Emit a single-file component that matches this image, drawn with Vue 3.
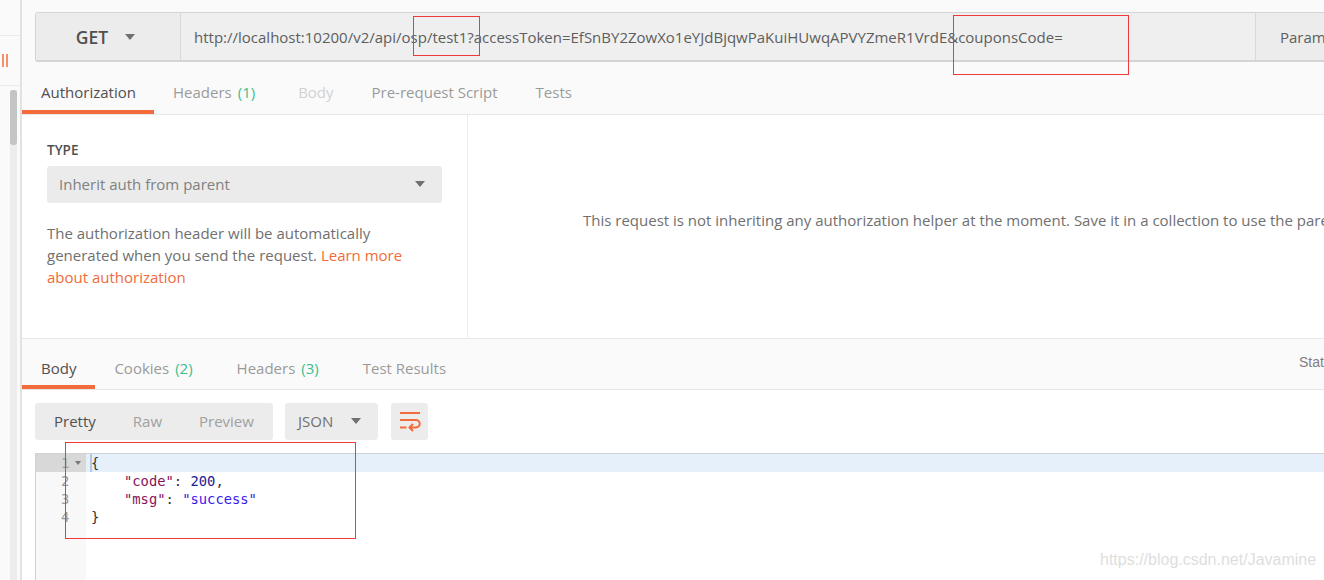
<script setup>
const requestTabs = [
  { label: 'Authorization', active: true },
  { label: 'Headers', count: '(1)' },
  { label: 'Body', disabled: true },
  { label: 'Pre-request Script' },
  { label: 'Tests' },
]
const responseTabs = [
  { label: 'Body', active: true },
  { label: 'Cookies', count: '(2)' },
  { label: 'Headers', count: '(3)' },
  { label: 'Test Results' },
]
</script>

<template>
  <div class="page">
    <aside class="side">
      <div class="side-top"></div>
      <div class="side-row"><span class="bars"></span></div>
      <div class="side-scroll"><div class="thumb"></div></div>
    </aside>

    <main class="main">
      <section class="request">
        <div class="urlbar">
          <div class="method">
            <span>GET</span>
            <i class="caret"></i>
          </div>
          <div class="url">http://localhost:10200/v2/api/osp/test1?accessToken=EfSnBY2ZowXo1eYJdBjqwPaKuiHUwqAPVYZmeR1VrdE&amp;couponsCode=</div>
          <div class="params">Params</div>
        </div>
        <nav class="tabs req-tabs">
          <div
            v-for="t in requestTabs"
            :key="t.label"
            class="tab"
            :class="{ active: t.active, disabled: t.disabled }"
          >{{ t.label }}<span v-if="t.count" class="count">{{ t.count }}</span></div>
        </nav>
      </section>

      <section class="auth">
        <div class="auth-left">
          <div class="type">TYPE</div>
          <div class="select">
            <span>Inherit auth from parent</span>
            <i class="caret small"></i>
          </div>
          <p class="desc">The authorization header will be automatically generated when you send the request. <span class="link">Learn more about authorization</span></p>
        </div>
        <div class="auth-right">
          <span>This request is not inheriting any authorization helper at the moment. Save it in a collection to use the parent's authorization helper.</span>
        </div>
      </section>

      <section class="response">
        <nav class="tabs res-tabs">
          <div
            v-for="t in responseTabs"
            :key="t.label"
            class="tab"
            :class="{ active: t.active }"
          >{{ t.label }}<span v-if="t.count" class="count">{{ t.count }}</span></div>
          <div class="status">Status</div>
        </nav>

        <div class="toolbar">
          <div class="seg">
            <span class="on">Pretty</span>
            <span>Raw</span>
            <span>Preview</span>
          </div>
          <div class="format">
            <span>JSON</span>
            <i class="caret small"></i>
          </div>
          <div class="wrap-btn">
            <svg width="22" height="20" viewBox="0 0 22 20" fill="none" stroke="#f26b3a" stroke-width="2">
              <path d="M1 1H21"/>
              <path d="M1 8H17A3.75 3.75 0 0 1 17 15.5H11"/>
              <path d="M1 15.5H7.5"/>
              <path d="M14 12L10.5 15.5L14 19"/>
            </svg>
          </div>
        </div>

        <div class="editor">
          <div class="gutter">
            <div class="num current">1<i class="fold"></i></div>
            <div class="num">2</div>
            <div class="num">3</div>
            <div class="num">4</div>
          </div>
          <div class="code">
            <div class="line current"><span class="cursor"></span>{</div>
            <div class="line indent"><span class="key">"code"</span>: <span class="n">200</span>,</div>
            <div class="line indent"><span class="key">"msg"</span>: <span class="s">"success"</span></div>
            <div class="line">}</div>
          </div>
        </div>
      </section>
    </main>

    <div class="mark m1"></div>
    <div class="mark m2"></div>
    <div class="mark m3"></div>
    <div class="watermark">https://blog.csdn.net/Javamine</div>
  </div>
</template>

<style>
html, body { margin: 0; background: #fff; overflow: hidden; }
</style>

<style scoped>
.page {
  position: relative;
  display: flex;
  width: 1324px;
  height: 580px;
  overflow: hidden;
  font-family: "Open Sans", sans-serif;
  font-size: 15px;
  color: #505050;
  background: #fff;
}

/* sidebar */
.side {
  flex: none;
  width: 22px;
  box-sizing: border-box;
  display: flex;
  flex-direction: column;
  background: #fafafa;
  border-right: 2px solid #e2e2e2;
}
.side-top { height: 35px; border-bottom: 1px solid #ececec; }
.side-row {
  height: 49px;
  border-bottom: 1px solid #ececec;
  display: flex;
  align-items: center;
}
.bars {
  width: 2px;
  height: 13px;
  margin-left: 2px;
  border-left: 2px solid #f7906a;
  border-right: 2px solid #f7906a;
}
.side-scroll {
  flex: 1;
  margin: 4px 3px 0 10px;
  background: #ececec;
}
.thumb { height: 55px; background: #c4c4c4; border-radius: 3px; }

/* main column */
.main {
  flex: 1;
  min-width: 0;
  display: flex;
  flex-direction: column;
}
.request {
  height: 115px;
  box-sizing: border-box;
  background: #fafafa;
  border-bottom: 1px solid #e8e8e8;
  padding-top: 12px;
}
.urlbar {
  display: flex;
  height: 50px;
  box-sizing: border-box;
  margin-left: 13px;
  width: 1400px;
  background: #efefef;
  border: 1px solid #d4d4d4;
  border-bottom-width: 2px;
  border-radius: 3px 0 0 3px;
}
.method {
  flex: none;
  width: 145px;
  box-sizing: border-box;
  display: flex;
  align-items: center;
  justify-content: center;
  gap: 17px;
  padding-right: 5px;
  background: #ececec;
  border-right: 1px solid #d8d8d8;
  font-size: 17.5px;
  font-weight: 600;
  color: #505050;
}
.caret {
  display: block;
  width: 0;
  height: 0;
  border-left: 5px solid transparent;
  border-right: 5px solid transparent;
  border-top: 6px solid #707070;
}
.url {
  flex: none;
  width: 1074px;
  box-sizing: border-box;
  padding-left: 13px;
  line-height: 48px;
  white-space: nowrap;
  color: #5e5e5e;
}
.params {
  flex: 1;
  padding-left: 24px;
  line-height: 48px;
  background: #ececec;
  border-left: 1px solid #d8d8d8;
  color: #5e5e5e;
}

/* tabs */
.tabs { display: flex; }
.tab {
  box-sizing: border-box;
  height: 43px;
  line-height: 42px;
  color: #9a9a9a;
  white-space: nowrap;
  border-bottom: 4px solid transparent;
}
.tab.active { color: #505050; border-bottom-color: #f26b3a; }
.tab.disabled { color: #d2d2d2; }
.count { color: #3cbf8f; margin-left: 6px; }

.req-tabs { margin-top: 9px; }
.req-tabs .tab { padding: 0 19px; }
.req-tabs .tab:first-child { width: 132px; }
.req-tabs .tab:nth-child(2) { margin-right: 5px; }

/* auth */
.auth {
  flex: none;
  height: 223px;
  display: flex;
  border-bottom: 1px solid #e8e8e8;
}
.auth-left {
  flex: none;
  width: 446px;
  box-sizing: border-box;
  padding: 25px 25px 0;
  border-right: 1px solid #ececec;
}
.type {
  font-size: 13.5px;
  font-weight: 600;
  line-height: 20px;
  color: #505050;
}
.select {
  margin-top: 6px;
  height: 37px;
  box-sizing: border-box;
  display: flex;
  align-items: center;
  justify-content: space-between;
  padding: 0 17px 2px 12px;
  width: 395px;
  background: #ebebeb;
  border-radius: 3px;
  color: #808080;
}
.caret.small {
  border-left-width: 5.5px;
  border-right-width: 5.5px;
  border-top-width: 6px;
}
.desc {
  margin: 19px 0 0;
  width: 380px;
  line-height: 22px;
  color: #707070;
}
.link { color: #f26b3a; }
.auth-right {
  flex: 1;
  min-width: 0;
  box-sizing: border-box;
  padding: 93px 0 0 115px;
  line-height: 24px;
  white-space: nowrap;
  color: #707070;
}

/* response */
.response { flex: 1; min-height: 0; display: flex; flex-direction: column; }
.res-tabs {
  position: relative;
  height: 51px;
  box-sizing: border-box;
  background: #fafafa;
  border-bottom: 1px solid #e6e6e6;
  padding-top: 9px;
}
.res-tabs .tab { height: 41px; line-height: 41px; padding: 0 19px; }
.res-tabs .tab:nth-child(2) { padding-right: 25px; }
.res-tabs .tab:nth-child(3) { padding-right: 25px; }
.status {
  position: absolute;
  left: 1277px;
  top: 15px;
  font-family: "Liberation Sans", sans-serif;
  font-size: 14px;
  color: #808080;
}
.toolbar {
  display: flex;
  gap: 12px;
  margin: 13px 0 0 13px;
  height: 37px;
}
.seg {
  display: flex;
  align-items: center;
  width: 238px;
  box-sizing: border-box;
  padding: 0 0 2px 19px;
  gap: 37px;
  background: #ececec;
  border-radius: 3px;
  color: #a0a0a0;
}
.seg .on { color: #505050; }
.format {
  display: flex;
  align-items: center;
  justify-content: space-between;
  width: 93px;
  box-sizing: border-box;
  padding: 0 17px 2px 13px;
  background: #ececec;
  border-radius: 3px;
  color: #707070;
}
.wrap-btn {
  width: 37px;
  margin-left: 1px;
  display: flex;
  align-items: center;
  justify-content: center;
  background: #ececec;
  border-radius: 3px;
}
.editor {
  flex: 1;
  display: flex;
  margin: 13px 0 0 13px;
  border-left: 1px solid #d0d0d0;
  font-family: "DejaVu Sans Mono", monospace;
  font-size: 13.8px;
  line-height: 18px;
}
.gutter {
  flex: none;
  width: 50px;
  background: #f8f8f8;
  border-top: 1px solid #cfd3d8;
  color: #9a9a9a;
}
.num {
  position: relative;
  height: 18px;
  padding-left: 25px;
  box-sizing: border-box;
}
.num.current { background: #d8d8d8; color: #999; }
.fold {
  position: absolute;
  left: 39px;
  top: 7px;
  width: 0;
  height: 0;
  border-left: 3.5px solid transparent;
  border-right: 3.5px solid transparent;
  border-top: 4px solid #777;
}
.code {
  flex: 1;
  border-top: 1px solid #cfd3d8;
  color: #333;
}
.line {
  position: relative;
  height: 18px;
  padding-left: 5px;
  white-space: pre;
}
.line.indent { padding-left: 38px; }
.line.current { background: #e6f0fb; }
.cursor {
  position: absolute;
  left: 4px;
  top: 0;
  width: 2px;
  height: 18px;
  background: #b4c8dc;
}
.key { color: #881359; }
.n { color: #1c1c94; }
.s { color: #3a18e8; }

/* red annotations drawn over the screenshot */
.mark {
  position: absolute;
  box-sizing: border-box;
  border: 1px solid #f03a3a;
}
.m1 { left: 413px; top: 16px; width: 67px; height: 40px; }
.m2 { left: 953px; top: 15px; width: 176px; height: 60px; }
.m3 { left: 65px; top: 442px; width: 291px; height: 97px; }
.watermark {
  position: absolute;
  left: 1100px;
  top: 550px;
  font-family: "Liberation Sans", sans-serif;
  font-size: 16px;
  line-height: 20px;
  color: #dedede;
  white-space: nowrap;
}
</style>
